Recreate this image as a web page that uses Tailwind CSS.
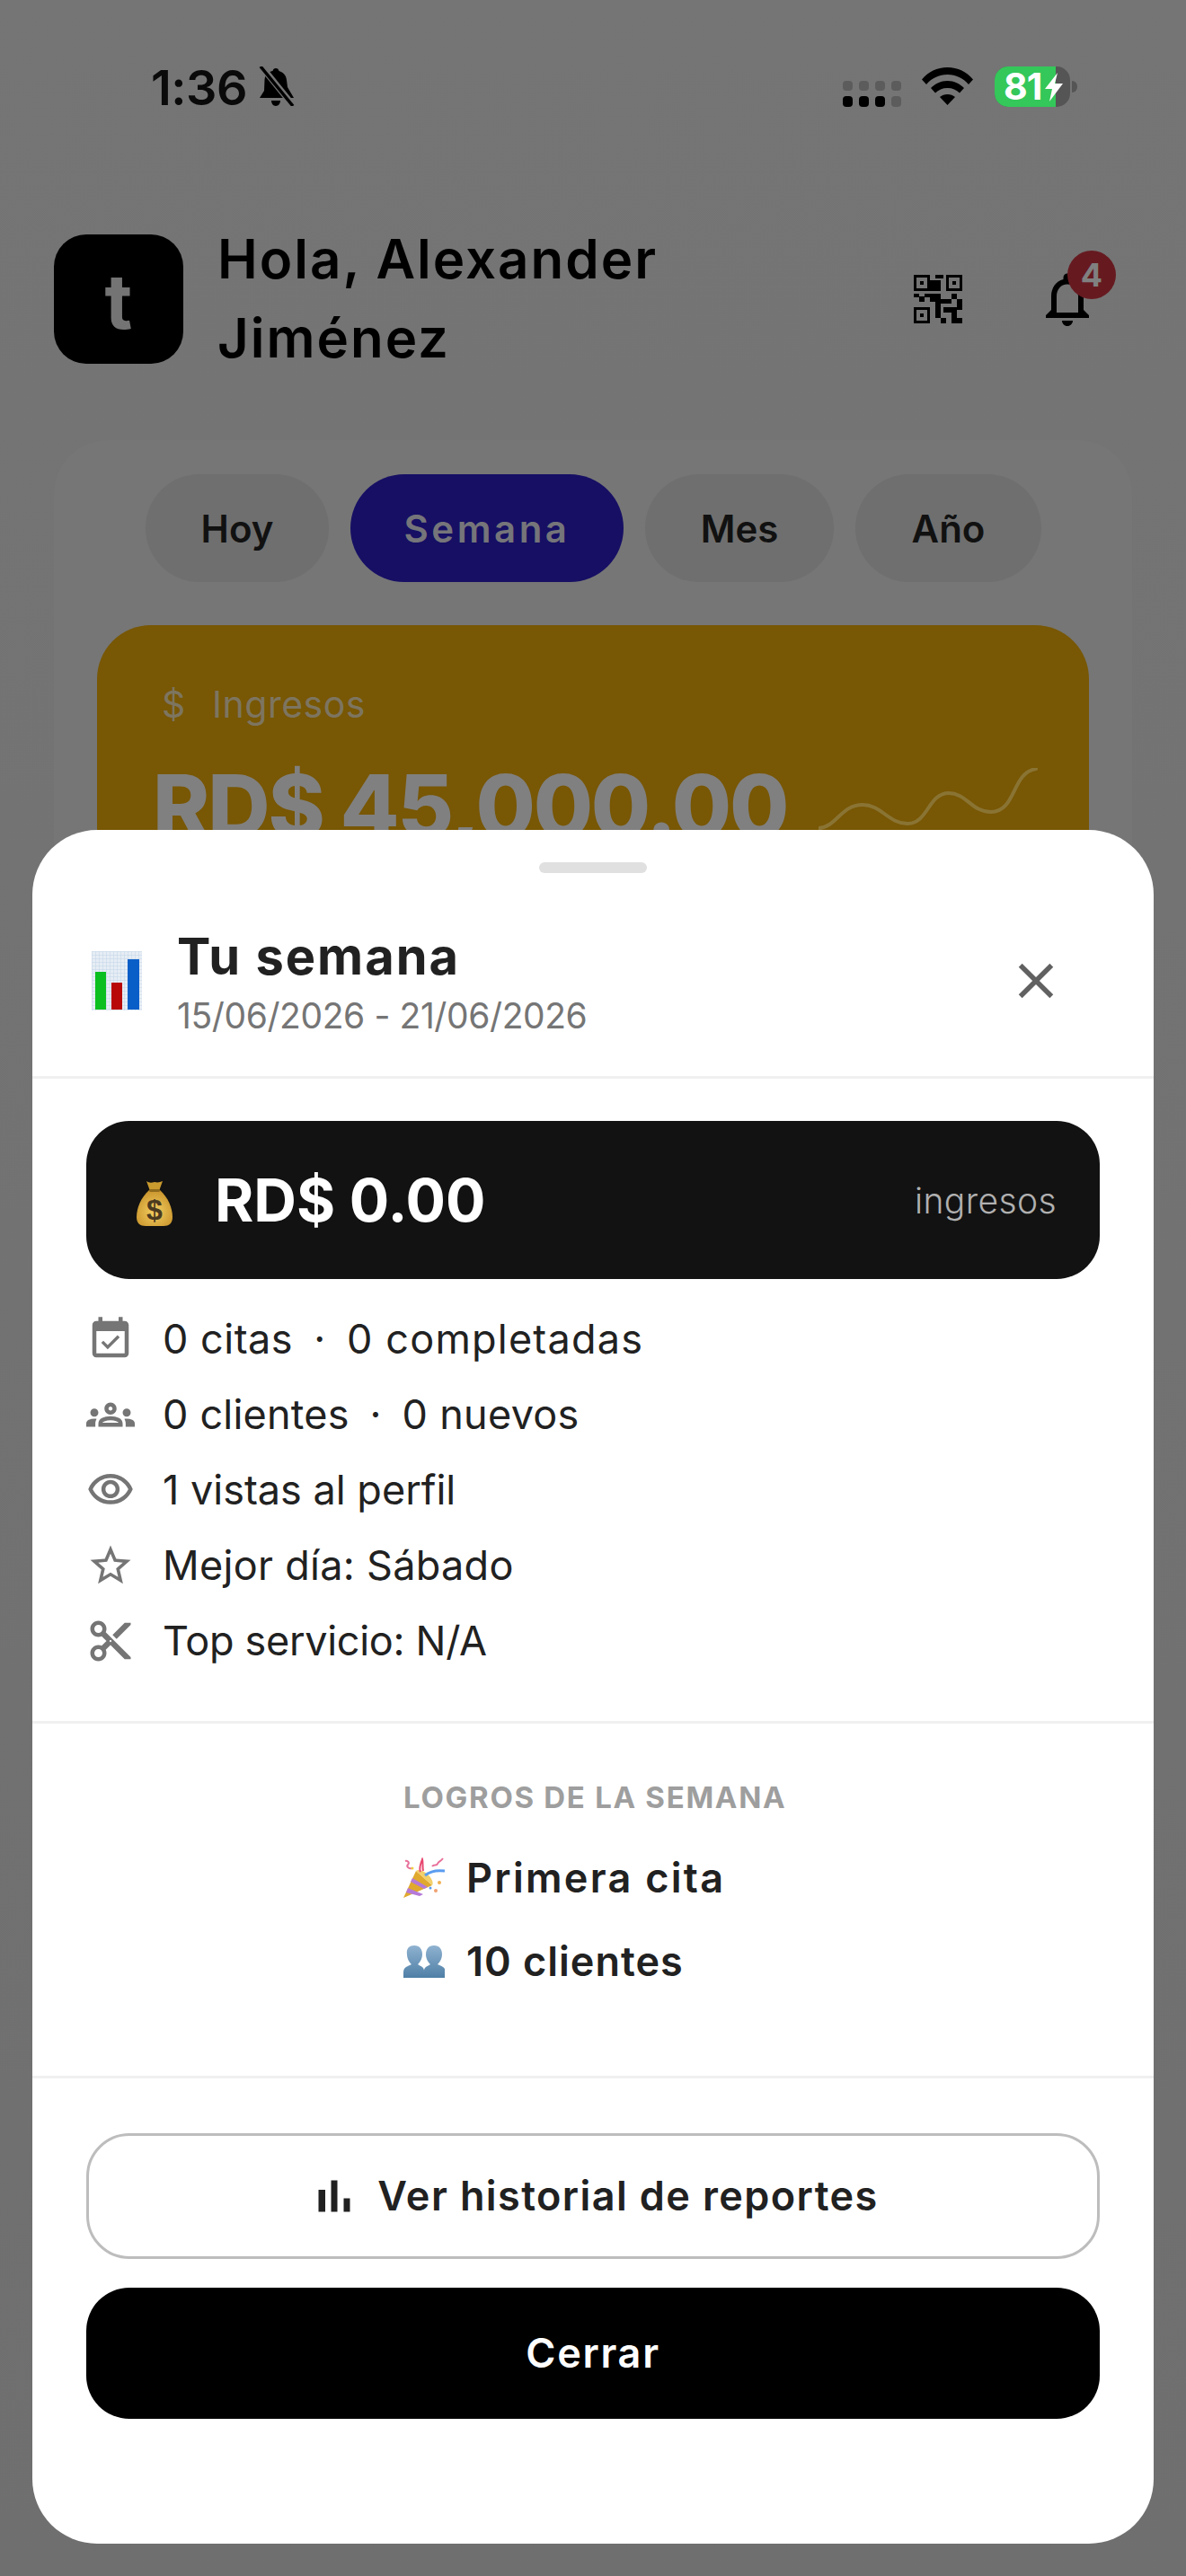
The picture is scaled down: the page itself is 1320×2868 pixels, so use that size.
<!DOCTYPE html>
<html lang="es">
<head>
  <meta charset="UTF-8">
  <title>Tu semana</title>
  <script src="https://cdn.jsdelivr.net/npm/@tailwindcss/browser@4"></script>
</head>
<body class="bg-[#727272]">
  <div class="relative w-[1320px] h-[2868px] overflow-hidden bg-gradient-to-b from-[#757575] to-[#6f6f6f] font-['Inter',sans-serif]">

    <!-- status bar -->
    <div class="flex items-start h-[261px] pt-[76px] pl-[168px]">
      <span class="text-[54px] leading-[44px] font-semibold text-[#0a0a0a] tracking-[-0.500px]">1:36</span>
      <svg class="ml-[12px] mt-[-2px] w-[42px] h-[44px]" viewBox="0 0 42 44" fill="#000">
        <path d="M20 2c2 0 3 1 3.500 3 5 1.500 8 5 8.500 10l1 8 7 12H2l5-8 .5-12C8 9 11 6 16.500 5 17 3 18 2 20 2zM15 38h10c0 3-2 6-5 6s-5-3-5-6z"/>
        <path d="M4 0l34 42" stroke="#747474" stroke-width="7"/>
        <path d="M3 0l36 44" stroke="#000" stroke-width="3.500"/>
      </svg>
      <div class="ml-auto mr-[121px] flex items-start mt-[-2px]">
        <div class="grid grid-cols-4 gap-x-[7px] gap-y-[6px] mt-[16px]">
          <i class="block w-[11px] h-[11px] rounded-[4px] bg-[#5c5c5c]"></i><i class="block w-[11px] h-[11px] rounded-[4px] bg-[#5c5c5c]"></i><i class="block w-[11px] h-[11px] rounded-[4px] bg-[#5c5c5c]"></i><i class="block w-[11px] h-[11px] rounded-[4px] bg-[#5c5c5c]"></i>
          <i class="block w-[11px] h-[12px] rounded-[4px] bg-black"></i><i class="block w-[11px] h-[12px] rounded-[4px] bg-black"></i><i class="block w-[11px] h-[12px] rounded-[4px] bg-black"></i><i class="block w-[11px] h-[12px] rounded-[4px] bg-[#5c5c5c]"></i>
        </div>
        <svg class="ml-[23px] mt-[1px] w-[57px] h-[42px]" viewBox="0 0 57 42" fill="#000">
          <path d="M0 13.500C7 5 17 0 28.500 0S50 5 57 13.500l-5 5.500C46 12 38 8 28.500 8S11 12 5 19z"/>
          <path d="M10 23c5-5 11-8 18.500-8S42 18 47 23l-5 5.500C38.500 25 34 23 28.500 23S18.500 25 15 28.500z"/>
          <path d="M20 33c2.500-2 5-3 8.500-3s6 1 8.500 3l-8.500 9z"/>
        </svg>
        <div class="relative ml-[24px] w-[84px] h-[45px] rounded-[15px] bg-[#555555]">
          <div class="w-[68px] h-full rounded-l-[15px] bg-[#34c759]"></div>
          <span class="absolute left-[10px] top-0 text-[41px] leading-[45px] font-bold text-white tracking-[-1px]">81</span>
          <svg class="absolute left-[56px] top-[7px] w-[20px] h-[32px]" viewBox="0 0 20 32" fill="#fff"><path d="M14 0L0 18h8L5 32l15-20h-9z"/></svg>
        </div>
        <div class="ml-[2px] mt-[16px] w-[6px] h-[13px] rounded-r-full bg-[#555555]"></div>
      </div>
    </div>

    <!-- greeting -->
    <div class="relative flex items-start pl-[60px] pr-[48px] h-[229px]">
      <div class="flex items-center justify-center w-[144px] h-[144px] pt-[6px] rounded-[36px] bg-black">
        <span class="text-[84px] leading-none font-bold text-[#747474]">t</span>
      </div>
      <h1 class="ml-[38px] mt-[-17px] text-[60px] leading-[88px] font-semibold text-black tracking-[2px]">Hola, Alexander<br>Jiménez</h1>
      <svg class="absolute left-[1017px] top-[45px] w-[54px] h-[54px]" viewBox="0 0 9 9" fill="#000" shape-rendering="crispEdges">
        <path fill-rule="evenodd" d="M0 0h3v3H0zM.5.5v2h2v-2zM6 0h3v3H6zM6.500.5v2h2v-2zM0 6h3v3H0zM.5 6.500v2h2v-2z"/>
        <path d="M1.100 1.100h.8v.8h-.8zM7.100 1.100h.8v.8h-.8zM1.100 7.100h.8v.8h-.8z"/>
        <path d="M4 0h1.500v.7H4zM3 1h2v2H3zM0 3.500h1v.6H0zM2 3.500h3v.6H2zM7 3.500h1v1H7zM1 4h1v1H1zM3 4h2v1H3zM5 4.500h2v.8H5zM8 4.500h1v2H8zM4 5h1v3H4zM5.500 6h2.500v1H5.500zM7 7h1v1H7zM5 8h1v1H5zM7 8h2v1H7z"/>
      </svg>
      <svg class="absolute left-[1152px] top-[36px] w-[72px] h-[72px]" viewBox="0 0 24 24" fill="#000"><path d="M12 22c1.100 0 2-.9 2-2h-4c0 1.100.9 2 2 2zm6-6v-5c0-3.070-1.630-5.640-4.500-6.320V4c0-.83-.67-1.500-1.500-1.500s-1.500.67-1.500 1.500v.68C7.640 5.360 6 7.920 6 11v5l-2 2v1h16v-1l-2-2zm-2 1H8v-6c0-2.480 1.510-4.500 4-4.500s4 2.020 4 4.500v6z"/></svg>
      <span class="absolute left-[1188px] top-[18px] flex items-center justify-center w-[54px] h-[54px] rounded-full bg-[#661a20] text-[36px] font-bold text-[#808080]">4</span>
    </div>

    <!-- dashboard behind the sheet -->
    <div class="mx-[60px] h-[900px] rounded-[60px] bg-[#767676] px-[48px] pt-[38px]">
      <div class="flex gap-[24px] pl-[54px]">
        <div class="flex items-center justify-center w-[204px] h-[120px] rounded-full bg-[#6f6f6f] text-[42px] font-semibold text-[#111111]">Hoy</div>
        <div class="flex items-center justify-center w-[304px] h-[120px] rounded-full bg-[#160f64] text-[42px] font-semibold text-[#75757a] tracking-[3.500px]">Semana</div>
        <div class="flex items-center justify-center w-[210px] h-[120px] rounded-full bg-[#6f6f6f] text-[42px] font-semibold text-[#111111]">Mes</div>
        <div class="flex items-center justify-center w-[207px] h-[120px] rounded-full bg-[#6f6f6f] text-[42px] font-semibold text-[#111111]">Año</div>
      </div>
      <div class="relative mt-[48px] h-[600px] rounded-[60px] bg-[#785705] pl-[62px] pt-[62px]">
        <div class="flex items-center h-[54px] text-[41px] text-[#7d7560] tracking-[0.500px]"><span class="w-[66px] pl-[10px]">$</span><span>Ingresos</span></div>
        <div class="mt-[27px] text-[96px] leading-[116px] font-extrabold text-[#808080] tracking-[-2.200px]">RD$ 45,000.00</div>
        <svg class="absolute left-[803px] top-[159px] w-[244px] h-[70px]" viewBox="0 0 244 70" fill="none" stroke="#8a7434" stroke-width="4" stroke-linecap="round"><path d="M0 67C20 66 25 41 49 41C70 41 78 62 99 62C122 62 122 28 145 28C165 28 170 49 192 49C220 49 215 5 242 1"/></svg>
      </div>
    </div>

    <!-- report sheet -->
    <div class="absolute left-[36px] top-[924px] w-[1248px] h-[1908px] rounded-[72px] bg-white text-[#212121]">
      <div class="mx-auto mt-[36px] w-[120px] h-[12px] rounded-full bg-[#e0e0e0]"></div>

      <div class="flex items-center h-[229px] border-b-[3px] border-[#f0f0f0] pl-[66px] pr-[98px]">
        <svg class="w-[56px] h-[66px] mt-[13px]" viewBox="0 0 56 66">
          <defs><pattern id="g" width="4" height="4" patternUnits="userSpaceOnUse"><rect width="4" height="4" fill="#e6edf5"/><path d="M0 0h4M0 0v4" stroke="#c3d5e8" stroke-width="1"/></pattern></defs>
          <rect width="56" height="66" fill="url(#g)"/>
          <rect x="4" y="23" width="12" height="42" fill="#0bbf20"/>
          <rect x="22" y="35" width="12" height="30" fill="#b80808"/>
          <rect x="40" y="9" width="13" height="56" fill="#0a5ec8"/>
        </svg>
        <div class="ml-[39px] mt-[17px]">
          <div class="text-[56px] leading-[66px] font-bold tracking-[2px]">Tu semana</div>
          <div class="mt-[8px] text-[39px] leading-[50px] text-[#757575] tracking-[-0.400px]">15/06/2026 - 21/06/2026</div>
        </div>
        <svg class="ml-auto mt-[14px] w-[66px] h-[66px]" viewBox="0 0 24 24" fill="#616161"><path d="M19 6.410L17.590 5 12 10.590 6.410 5 5 6.410 10.590 12 5 17.590 6.410 19 12 13.410 17.590 19 19 17.590 13.410 12z"/></svg>
      </div>

      <div class="mx-[60px] mt-[47px] flex items-center h-[176px] rounded-[48px] bg-[#121212] pl-[56px] pr-[48px]">
        <svg class="w-[40px] h-[50px] mt-[8px]" viewBox="0 0 40 50">
          <defs><radialGradient id="b" cx="0.5" cy="0.6" r="0.6"><stop offset="0" stop-color="#f4cf62"/><stop offset="1" stop-color="#c9952c"/></radialGradient></defs>
          <path d="M11 0c3 2 5 2 9 1 4 1 6 0 9-1l-4 11H15z" fill="#c99a2e"/>
          <path d="M14 10h12c9 8 14 20 14 30 0 7-4 10-10 10H10C4 50 0 47 0 40c0-10 5-22 14-30z" fill="url(#b)"/>
          <rect x="14" y="9" width="12" height="3" rx="1.500" fill="#8f6a1c"/>
          <text x="20" y="43" text-anchor="middle" font-size="32" font-weight="700" fill="#4a3a20" font-family="Liberation Sans">$</text>
        </svg>
        <span class="ml-[47px] text-[66px] font-bold text-white">RD$ 0.00</span>
        <span class="ml-auto mt-[3px] text-[39px] font-light text-[#b0b0b0] tracking-[0.400px]">ingresos</span>
      </div>

      <ul class="mt-[25px] ml-[60px] text-[45px]">
        <li class="flex items-center h-[84px]">
          <svg class="w-[54px] h-[54px]" viewBox="0 0 24 24" fill="#757575"><path d="M16.530 11.060L15.470 10l-4.880 4.880-2.120-2.120-1.060 1.060L10.590 17l5.940-5.940zM19 3h-1V1h-2v2H8V1H6v2H5c-1.110 0-1.990.9-1.990 2L3 19c0 1.100.89 2 2 2h14c1.100 0 2-.9 2-2V5c0-1.100-.9-2-2-2zm0 16H5V8h14v11z"/></svg>
          <span class="ml-[31px] tracking-[0.500px]">0 citas <span class="mx-[10px]">·</span> <span class="tracking-[1.200px]">0 completadas</span></span>
        </li>
        <li class="flex items-center h-[84px]">
          <svg class="w-[54px] h-[54px]" viewBox="0 0 24 24" fill="#757575"><path d="M4 13c1.100 0 2-.9 2-2 0-1.100-.9-2-2-2s-2 .9-2 2c0 1.100.9 2 2 2zm1.130 1.100C4.760 14.040 4.390 14 4 14c-.99 0-1.930.21-2.780.58C.48 14.900 0 15.620 0 16.430V18h4.500v-1.610c0-.83.23-1.610.63-2.290zM20 13c1.100 0 2-.9 2-2 0-1.100-.9-2-2-2s-2 .9-2 2c0 1.100.9 2 2 2zm4 3.430c0-.81-.48-1.530-1.220-1.850C21.930 14.210 20.990 14 20 14c-.39 0-.76.04-1.130.1.4.68.63 1.460.63 2.290V18H24v-1.570zM16.240 13.650c-1.170-.52-2.610-.9-4.240-.9-1.630 0-3.070.39-4.240.9C6.680 14.130 6 15.210 6 16.390V18h12v-1.610c0-1.180-.68-2.260-1.760-2.740zM8.070 16c.09-.23.13-.39.91-.69.97-.38 1.990-.56 3.020-.56s2.050.18 3.020.56c.77.3.81.46.91.69H8.070zM12 8c.55 0 1 .45 1 1s-.45 1-1 1-1-.45-1-1 .45-1 1-1m0-2c-1.660 0-3 1.340-3 3s1.340 3 3 3 3-1.340 3-3-1.340-3-3-3z"/></svg>
          <span class="ml-[31px] tracking-[0.200px]">0 clientes <span class="mx-[10px]">·</span> <span class="tracking-[0.300px]">0 nuevos</span></span>
        </li>
        <li class="flex items-center h-[84px]">
          <svg class="w-[54px] h-[54px]" viewBox="0 0 24 24" fill="#757575"><path d="M12 6c3.790 0 7.170 2.130 8.820 5.500C19.170 14.870 15.790 17 12 17s-7.170-2.130-8.820-5.500C4.830 8.130 8.210 6 12 6m0-2C7 4 2.730 7.110 1 11.500 2.730 15.890 7 19 12 19s9.270-3.110 11-7.500C21.270 7.110 17 4 12 4zm0 5c1.380 0 2.500 1.120 2.500 2.500S13.380 14 12 14s-2.500-1.120-2.500-2.500S10.620 9 12 9m0-2c-2.480 0-4.500 2.020-4.500 4.500S9.520 16 12 16s4.500-2.020 4.500-4.500S14.480 7 12 7z"/></svg>
          <span class="ml-[31px]">1 vistas al perfil</span>
        </li>
        <li class="flex items-center h-[84px]">
          <svg class="w-[54px] h-[54px]" viewBox="0 0 24 24" fill="#757575"><path d="M22 9.240l-7.190-.62L12 2 9.190 8.630 2 9.240l5.460 4.730L5.820 21 12 17.270 18.180 21l-1.630-7.030L22 9.240zM12 15.400l-3.760 2.270 1-4.280-3.320-2.880 4.380-.38L12 6.100l1.710 4.040 4.380.38-3.320 2.880 1 4.280L12 15.400z"/></svg>
          <span class="ml-[31px] tracking-[0.300px]">Mejor día: Sábado</span>
        </li>
        <li class="flex items-center h-[84px]">
          <svg class="w-[54px] h-[54px]" viewBox="0 0 24 24" fill="#757575"><path d="M9.640 7.640c.23-.5.36-1.050.36-1.640 0-2.210-1.790-4-4-4S2 3.790 2 6s1.790 4 4 4c.59 0 1.140-.13 1.640-.36L10 12l-2.360 2.360C7.140 14.130 6.590 14 6 14c-2.210 0-4 1.790-4 4s1.790 4 4 4 4-1.790 4-4c0-.59-.13-1.140-.36-1.640L12 14l7 7h3v-1L9.640 7.640zM6 8c-1.100 0-2-.89-2-2s.9-2 2-2 2 .89 2 2-.9 2-2 2zm0 12c-1.100 0-2-.89-2-2s.9-2 2-2 2 .89 2 2-.9 2-2 2zm6-7.500c-.28 0-.5-.22-.5-.5s.22-.5.5-.5.5.22.5.5-.22.5-.5.5zM19 3l-6 6 2 2 7-7V3h-3z"/></svg>
          <span class="ml-[31px] tracking-[-0.300px]">Top servicio: N/A</span>
        </li>
      </ul>

      <div class="mt-[47px] h-[398px] border-y-[3px] border-[#f0f0f0] pl-[413px]">
        <div class="pt-[60px] text-[33px] leading-[44px] font-bold text-[#9e9e9e] tracking-[1.700px]">LOGROS DE LA SEMANA</div>
        <div class="mt-[38px] flex items-center h-[60px] text-[45px] font-semibold">
          <svg class="w-[46px] h-[46px]" viewBox="0 0 46 46">
            <path d="M0 45l14-30 18 16z" fill="#e0a92e"/>
            <path d="M5 34l17 7-4 2-15-4zM10 23l17 10-4 2-15-8z" fill="#b57ad8"/>
            <path d="M14 15l18 16c2-3-1-9-6-13-5-4-10-5-12-3z" fill="#f2cf6a"/>
            <path d="M19 16c-2-4 0-9 2-14 1 3 0 9 1 13" fill="none" stroke="#e8476f" stroke-width="2"/>
            <path d="M24 20c6-5 14-6 22-5" fill="none" stroke="#5a9cf0" stroke-width="3"/>
            <path d="M2 4c3-1 5 2 3 4s1 5 4 4M32 10c2-3 5 0 6-3s3-2 6-6" fill="none" stroke="#e8709a" stroke-width="2"/>
            <circle cx="40" cy="28" r="2" fill="#f0b050"/><circle cx="36" cy="37" r="2" fill="#f0a070"/><circle cx="10" cy="12" r="1.500" fill="#f0d040"/><circle cx="30" cy="34" r="1.500" fill="#5a9cf0"/>
          </svg>
          <span class="ml-[24px] tracking-[2.300px]">Primera cita</span>
        </div>
        <div class="mt-[33px] flex items-center h-[60px] text-[45px] font-semibold">
          <svg class="w-[46px] h-[36px]" viewBox="0 0 46 36">
            <defs><linearGradient id="p" x1="0" y1="0" x2="0" y2="1"><stop offset="0" stop-color="#8fb2d0"/><stop offset="1" stop-color="#4f7fa6"/></linearGradient></defs>
            <path d="M12 0c6 0 9 4 9 10 0 5-3 9-5 11 3 2 7 3 7 7 0-4 4-5 7-7-2-2-5-6-5-11 0-6 3-10 9-10s9 4 9 10c0 5-3 9-5 11 4 2 9 3 9 9v6H0v-6c0-6 5-7 9-9-2-2-5-6-5-11C3 4 6 0 12 0z" fill="url(#p)"/>
          </svg>
          <span class="ml-[24px] tracking-[1px]">10 clientes</span>
        </div>
      </div>

      <div class="mx-[60px] mt-[61px] flex items-center justify-center h-[140px] rounded-[48px] border-[3px] border-[#bdbdbd] text-[45px] font-semibold">
        <svg class="w-[60px] h-[60px] mr-[18px]" viewBox="0 0 24 24" fill="#212121"><path d="M5 9.200h3V19H5zM10.600 5h2.800v14h-2.800zm5.600 8H19v6h-2.800z"/></svg>
        <span class="tracking-[1.400px]">Ver historial de reportes</span>
      </div>
      <div class="mx-[60px] mt-[32px] flex items-center justify-center h-[146px] rounded-[48px] bg-black text-[45px] font-semibold text-white tracking-[1.700px]">Cerrar</div>
    </div>
  </div>
</body>
</html>
